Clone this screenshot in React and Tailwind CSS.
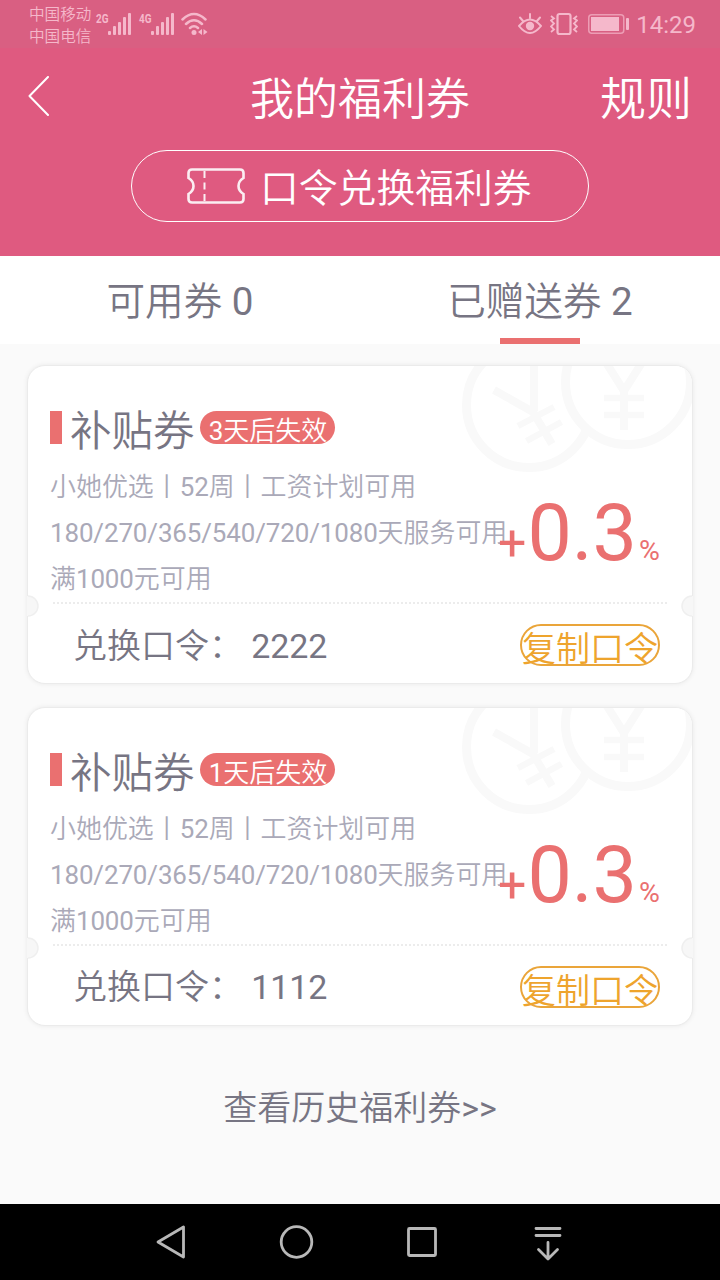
import { useState } from 'react';

const coupons = [
  { id: 1, title: '补贴券', expires: '3天后失效', rate: '0.3', code: '2222' },
  { id: 2, title: '补贴券', expires: '1天后失效', rate: '0.3', code: '1112' },
];

const tabs = [
  { key: 'available', label: '可用券', count: 0 },
  { key: 'given', label: '已赠送券', count: 2 },
];

export default function App() {
  const [tab, setTab] = useState('given');

  return (
    <div className="w-[720px] h-[1280px] flex flex-col overflow-hidden bg-[#fafafa] text-[#777583] whitespace-nowrap font-['Roboto','Noto_Sans_CJK_SC',sans-serif]">
      <StatusBar />

      {/* Header */}
      <header className="h-[208px] shrink-0 bg-[#df5a80] text-white font-[350]">
        <div className="h-[102px] grid grid-cols-[1fr_auto_1fr] items-center pl-7 pr-7">
          <button className="justify-self-start">
            <svg className="block w-[22px] h-10 mb-1.5" viewBox="0 0 22 40" fill="none" stroke="currentColor" strokeWidth="2" strokeLinecap="round" strokeLinejoin="round">
              <path d="M20 1 1.5 20 20 39" />
            </svg>
          </button>
          <h1 className="pt-0.5 text-[44px] leading-[44px] font-[350]">我的福利券</h1>
          <button className="justify-self-end text-[46px] leading-[46px]">规则</button>
        </div>
        <button className="mx-auto w-[458px] h-[72px] flex items-center rounded-full border border-white pl-[55px] text-[38.8px] leading-[38px]">
          <TicketIcon />
          <span className="ml-[15px] mt-[5px]">口令兑换福利券</span>
        </button>
      </header>

      {/* Tabs */}
      <nav className="h-[88px] shrink-0 flex bg-white">
        {tabs.map(t => (
          <button
            key={t.key}
            onClick={() => setTab(t.key)}
            className="flex-1 flex flex-col items-center text-[38.6px] leading-[38px] pt-[27px]"
          >
            <span><span className="font-[350]">{t.label}</span> {t.count}</span>
            {tab === t.key && <span className="mt-auto w-20 h-1.5 bg-[#ea7070]" />}
          </button>
        ))}
      </nav>

      {/* Coupons */}
      <main className="flex-1 flex flex-col items-center pt-[21px] gap-[22.500px]">
        {coupons.map(c => <CouponCard key={c.id} coupon={c} />)}
        <a className="mt-[40px] text-[34px] leading-[40px]"><span className="font-[350]">查看历史福利券</span>&gt;&gt;</a>
      </main>

      <NavBar />
    </div>
  );
}

function CouponCard({ coupon }) {
  return (
    <section className="relative w-[666px] h-[319px] rounded-[18px] border border-[#ebebeb] bg-white shadow-[0_0_5px_rgba(0,0,0,0.07)]">
      <CoinMark />
      <Notch className="-left-px" />
      <Notch className="-right-px -scale-x-100" />

      <div className="relative h-[238px] ml-[22px] mr-[25px]">
        <div className="flex pt-[45px] h-[98px]">
          <span className="w-3 h-[33px] bg-[#ea7070]" />
          <h2 className="ml-2 pt-1 text-[41.5px] leading-[33px] font-[350]">{coupon.title}</h2>
          <span className="ml-[5.500px] w-[135px] h-[33px] pt-1 pl-px rounded-full bg-[#ea7070] text-center text-[26px] leading-[33px] text-white">
            {coupon.expires.slice(0, 1)}<span className="font-[350]">{coupon.expires.slice(1)}</span>
          </span>
        </div>
        <div className="flex text-[#aaa9b8]">
          <div className="w-[448px] text-[25.950px] leading-[46px] font-[350]">
            <p>小她优选丨<Num>52</Num>周丨工资计划可用</p>
            <p><Num>180/270/365/540/720/1080</Num>天服务可用</p>
            <p>满<Num>1000</Num>元可用</p>
          </div>
          <p className="relative flex items-baseline h-[92px] pt-[23px] text-[#ea7070] leading-[92px]">
            <span className="text-[50px]">+</span>
            <span className="ml-px text-[79px]">{coupon.rate}</span>
            <span className="ml-0.5 text-[28.500px]">%</span>
          </p>
        </div>
      </div>
      <div className="-mt-0.5 ml-[25px] mr-[25px] border-b-2 border-dotted border-[#ececec]" />

      <div className="flex items-center h-[78px] pl-[45px] pr-8 text-[34px]">
        <p className="mt-1.5"><span className="font-[350]">兑换口令：</span><Num> {coupon.code}</Num></p>
        <button className="ml-auto mt-1 w-[140px] h-[42px] flex justify-center rounded-full border-2 border-[#eaa53a] pt-1 leading-[38px] font-[350] text-[#eea42d]">
          复制口令
        </button>
      </div>
    </section>
  );
}

function Num({ children }) {
  return <span className="font-normal tracking-[-0.12px]">{children}</span>;
}

function Notch({ className }) {
  return (
    <svg className={`absolute top-[229px] w-3 h-[22px] ${className}`} viewBox="0 0 12 22">
      <path d="M0 1h1a10 10 0 0 1 0 20H0z" fill="#f7f7f7" />
      <path d="M1 1a10 10 0 0 1 0 20" fill="none" stroke="#efefef" strokeWidth="1.500" />
    </svg>
  );
}

// Pair of overlapping coins in the card's top right corner
function CoinMark() {
  return (
    <svg className="absolute top-0 right-0 w-[231px] h-[108px] rounded-tr-[17px]" viewBox="461 366 231 108" fill="none" stroke="#f9f9f9" strokeWidth="9">
      <circle cx="529" cy="405" r="62.5" />
      <path d="M534 366V411M494 390l39 22 19 32" strokeWidth="8" />
      <path d="M518 426l36-19M526.500 441l35-19" strokeWidth="6.500" />
      <circle cx="628" cy="382" r="62.5" fill="#fff" />
      <path d="M607 364l17 27 17-27M624 388v42" strokeWidth="8" />
      <path d="M604 398h40M604 415h40" strokeWidth="6.500" />
    </svg>
  );
}

function TicketIcon() {
  return (
    <svg className="w-[58px] h-9" viewBox="0 0 58 36" fill="none" stroke="currentColor" strokeWidth="2.600" opacity=".9">
      <path d="M5 1.500H53Q56.500 1.500 56.500 5V10Q51.500 13 51.500 18T56.500 26V31Q56.500 34.500 53 34.500H5Q1.500 34.500 1.500 31V26Q6.500 23 6.500 18T1.500 10V5Q1.500 1.500 5 1.500Z" />
      <path d="M17.500 3v7M17.500 14.500v7M17.500 26v7" strokeWidth="2" />
    </svg>
  );
}

function Signal({ label }) {
  return (
    <svg className="w-[36px] h-6 overflow-visible" viewBox="0 0 36 24" fill="currentColor">
      <text x="0" y="11" fontSize="13.500" fontWeight="700" textLength="12.500" lengthAdjust="spacingAndGlyphs">{label}</text>
      <rect x="12" y="19" width="3" height="4" rx="1" />
      <rect x="17" y="14" width="3" height="9" rx="1" />
      <rect x="22" y="10" width="3" height="13" rx="1" />
      <rect x="27" y="5" width="3" height="18" rx="1" />
      <rect x="32" y="1" width="3" height="22" rx="1" />
    </svg>
  );
}

function StatusBar() {
  return (
    <div className="h-12 shrink-0 flex bg-[#d95f82] pl-[29px] pr-6 text-[#f5b8cb]">
      <div className="pt-[5px] text-[15.6px] leading-[21.500px] font-[350]">
        <p>中国移动</p>
        <p>中国电信</p>
      </div>
      <div className="flex items-start gap-[7px] pt-3 ml-[4.600px]">
        <Signal label="2G" />
        <Signal label="4G" />
        <svg className="-ml-0.5 w-7 h-6" viewBox="0 0 28 24" fill="none" stroke="currentColor" strokeWidth="2.500" strokeLinecap="round">
          <path d="M2.500 7.500Q14 -3.500 25.500 7.500M6 12Q14 4.500 22 12M10 16Q14 12.500 18 16" />
          <circle cx="14" cy="20.500" r="2.500" fill="currentColor" stroke="none" />
          <path d="M22 17v6l-4-3zM23.500 17v6l4-3z" fill="currentColor" stroke="none" />
        </svg>
      </div>
      <div className="ml-auto flex items-start pt-3">
        <svg className="w-6 h-6" viewBox="0 0 24 24" fill="none" stroke="currentColor" strokeWidth="2" strokeLinecap="round">
          <path d="M1 14Q12 1 23 14Q12 28 1 14ZM12 6V2M5 9 2 5.500M19 9l3-3.500" />
          <circle cx="12" cy="14" r="4.200" fill="currentColor" stroke="none" />
        </svg>
        <svg className="ml-2 w-7 h-6" viewBox="0 0 28 24" fill="none" stroke="currentColor" strokeWidth="2.200">
          <rect x="7.500" y="2" width="13" height="20" rx="2" />
          <path d="M1 4l3 2.500-3 2 3 3-3 3 3 3-3 2.500M27 4l-3 2.500 3 2-3 3 3 3-3 3 3 2.500" strokeWidth="1.800" />
        </svg>
        <svg className="ml-[10px] mt-0.5 w-[41px] h-5" viewBox="0 0 41 20" fill="currentColor">
          <rect x=".75" y=".75" width="35" height="18.500" rx="3" fill="none" stroke="currentColor" strokeWidth="1.500" opacity=".7" />
          <rect x="3" y="3" width="28" height="14" />
          <rect x="38" y="4" width="3" height="12" rx="1" />
        </svg>
        <span className="ml-[7px] text-[24px] leading-[26px]">14:29</span>
      </div>
    </div>
  );
}

function NavBar() {
  return (
    <footer className="h-[76px] shrink-0 bg-black text-[#b8b8b8]">
      <svg className="block w-[720px] h-[76px]" viewBox="0 0 720 76" fill="none" stroke="currentColor" strokeWidth="2.800" strokeLinecap="round" strokeLinejoin="round">
        <path d="M183.500 23v30L158 38z" />
        <circle cx="296.500" cy="38" r="15.300" />
        <rect x="408.500" y="24.500" width="27" height="27" rx="1" />
        <path d="M536 24.500h24M536 31.500h24M548 38.500v16M538.500 45.500l9.500 9.500 9.500-9.500" />
      </svg>
    </footer>
  );
}
